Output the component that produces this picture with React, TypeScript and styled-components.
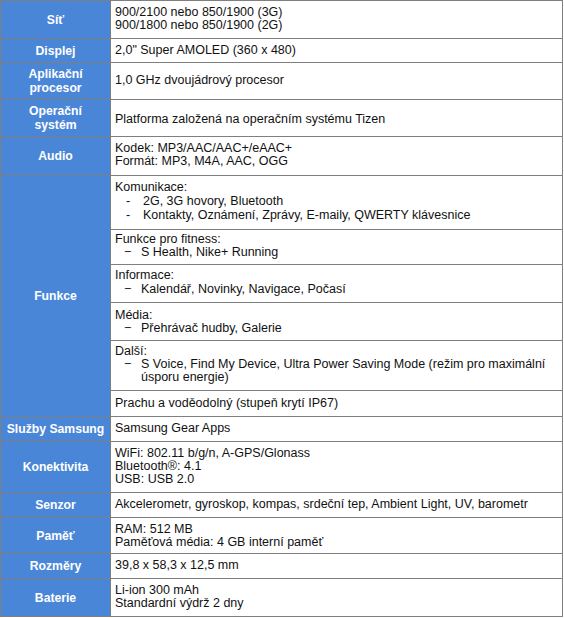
import React from 'react';
import styled, { createGlobalStyle } from 'styled-components';

const blue = '#4a86d8';
const line = '#7f7f7f';

const GlobalStyle = createGlobalStyle`
  body {
    margin: 0;
    background: #ffffff;
    font-family: "Liberation Sans", Arial, sans-serif;
  }
`;

const Table = styled.div`
  width: 563px;
  box-sizing: border-box;
  border: 1px solid ${line};
  font-family: "Liberation Sans", Arial, sans-serif;
  font-size: 12.5px;
  color: #111;
`;

const Row = styled.div`
  display: grid;
  grid-template-columns: 110px 1fr;

  & + & {
    border-top: 1px solid ${line};
  }
`;

const Label = styled.div`
  background: ${blue};
  color: #ffffff;
  font-weight: bold;
  font-size: 12.2px;
  line-height: 14px;
  padding: 4px 2px;
  border-right: 1px solid ${line};
  display: flex;
  align-items: center;
  justify-content: center;
  text-align: center;
  white-space: nowrap;
`;

const Value = styled.div<{ $top?: number; $bottom?: number }>`
  padding: ${(p) => p.$top ?? 5}px 4px ${(p) => p.$bottom ?? 6}px;
  line-height: 13px;
  display: flex;
  flex-direction: column;
  justify-content: center;
`;

const Stack = styled.div`
  display: flex;
  flex-direction: column;
`;

const SubCell = styled.div<{ $top: number; $bottom: number; $lh?: number }>`
  padding: ${(p) => p.$top}px 4px ${(p) => p.$bottom}px;
  line-height: ${(p) => p.$lh ?? 13}px;

  & + & {
    border-top: 1px solid ${line};
  }
`;

const Item = styled.div<{ $indent: number; $gap: number }>`
  display: flex;

  .mark {
    flex: 0 0 auto;
    width: ${(p) => p.$gap}px;
    padding-left: ${(p) => p.$indent}px;
    box-sizing: border-box;
  }

  .text {
    flex: 1;
  }
`;

interface spec {
  label: React.ReactNode;
  lines: string[];
  top?: number;
  bottom?: number;
}

const rowsTop: spec[] = [
  { label: 'Síť', lines: ['900/2100 nebo 850/1900 (3G)', '900/1800 nebo 850/1900 (2G)'] },
  { label: 'Displej', lines: ['2,0" Super AMOLED (360 x 480)'], bottom: 5 },
  { label: <>Aplikační<br />procesor</>, lines: ['1,0 GHz dvoujádrový procesor'] },
  { label: <>Operační<br />systém</>, lines: ['Platforma založená na operačním systému Tizen'], top: 8 },
  { label: 'Audio', lines: ['Kodek: MP3/AAC/AAC+/eAAC+', 'Formát: MP3, M4A, AAC, OGG'], bottom: 7 },
];

const rowsBottom: spec[] = [
  { label: 'Služby Samsung', lines: ['Samsung Gear Apps'] },
  { label: 'Konektivita', lines: ['WiFi: 802.11 b/g/n, A-GPS/Glonass', 'Bluetooth®: 4.1', 'USB: USB 2.0'] },
  { label: 'Senzor', lines: ['Akcelerometr, gyroskop, kompas, srdeční tep, Ambient Light, UV, barometr'] },
  { label: 'Paměť', lines: ['RAM: 512 MB', 'Paměťová média: 4 GB interní paměť'], bottom: 4 },
  { label: 'Rozměry', lines: ['39,8 x 58,3 x 12,5 mm'] },
  { label: 'Baterie', lines: ['Li-ion 300 mAh', 'Standardní výdrž 2 dny'] },
];

const SpecRow = ({ label, lines, top, bottom }: spec) => (
  <Row>
    <Label>{label}</Label>
    <Value $top={top} $bottom={bottom}>
      {lines.map((l) => (
        <div key={l}>{l}</div>
      ))}
    </Value>
  </Row>
);

const Dash = ({ children }: { children: React.ReactNode }) => (
  <Item $indent={9} $gap={26}>
    <span className="mark">−</span>
    <span className="text">{children}</span>
  </Item>
);

const Hyphen = ({ children }: { children: React.ReactNode }) => (
  <Item $indent={11} $gap={28}>
    <span className="mark">-</span>
    <span className="text">{children}</span>
  </Item>
);

export default function App() {
  return (
    <>
      <GlobalStyle />
      <Table>
        {rowsTop.map((r, i) => (
          <SpecRow key={i} {...r} />
        ))}
        <Row>
          <Label>Funkce</Label>
          <Stack>
            <SubCell $top={4} $bottom={7} $lh={14}>
              <div>Komunikace:</div>
              <Hyphen>2G, 3G hovory, Bluetooth</Hyphen>
              <Hyphen>Kontakty, Oznámení, Zprávy, E-maily, QWERTY klávesnice</Hyphen>
            </SubCell>
            <SubCell $top={3} $bottom={5}>
              <div>Funkce pro fitness:</div>
              <Dash>S Health, Nike+ Running</Dash>
            </SubCell>
            <SubCell $top={3} $bottom={6} $lh={14}>
              <div>Informace:</div>
              <Dash>Kalendář, Novinky, Navigace, Počasí</Dash>
            </SubCell>
            <SubCell $top={6} $bottom={5}>
              <div>Média:</div>
              <Dash>Přehrávač hudby, Galerie</Dash>
            </SubCell>
            <SubCell $top={4} $bottom={6}>
              <div>Další:</div>
              <Dash>S Voice, Find My Device, Ultra Power Saving Mode (režim pro maximální úsporu energie)</Dash>
            </SubCell>
            <SubCell $top={6} $bottom={6}>
              Prachu a voděodolný (stupeň krytí IP67)
            </SubCell>
          </Stack>
        </Row>
        {rowsBottom.map((r, i) => (
          <SpecRow key={i} {...r} />
        ))}
      </Table>
    </>
  );
}
